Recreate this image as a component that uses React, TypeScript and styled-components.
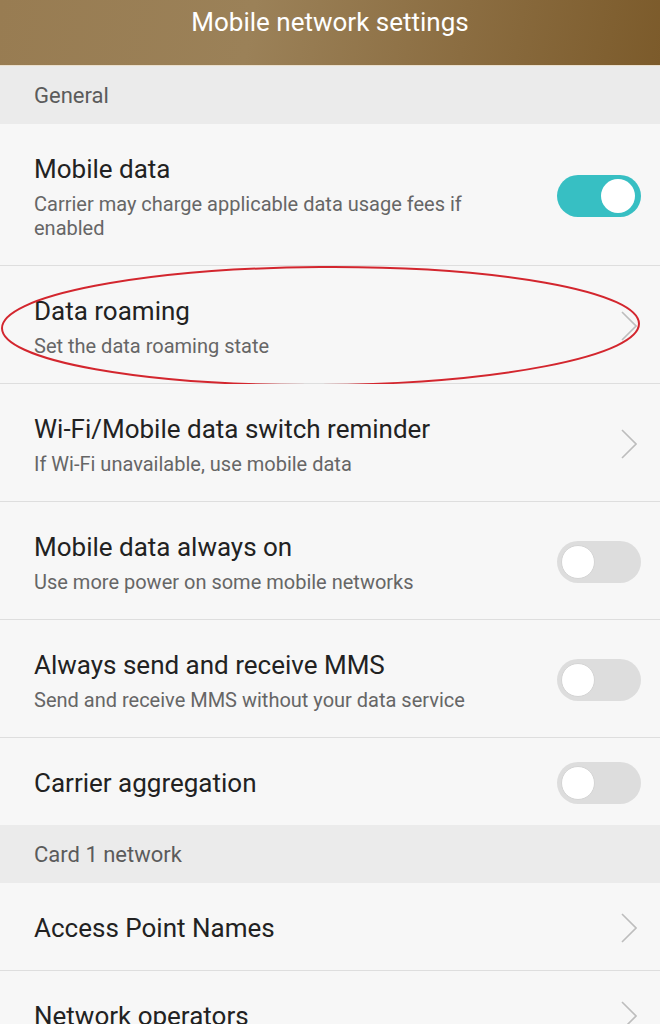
import * as React from 'react';
import styled, { createGlobalStyle } from 'styled-components';

const GlobalStyle = createGlobalStyle`
  html, body {
    margin: 0;
    padding: 0;
    background: #f7f7f7;
    font-family: Roboto, "Noto Sans", "Liberation Sans", sans-serif;
  }
`;

const Page = styled.div`
  width: 660px;
  height: 1024px;
  overflow: hidden;
  background: #f7f7f7;
`;

const Header = styled.header`
  height: 66px;
  box-sizing: border-box;
  padding-top: 6px;
  border-bottom: 1px solid #eadfcd;
  background: linear-gradient(100deg, #987c52 0%, #9b8158 38%, #8b6d41 70%, #7c5b2b 100%);
  color: #ffffff;
  font-size: 26px;
  line-height: 32px;
  text-align: center;
`;

const Section = styled.div`
  height: 58px;
  display: flex;
  align-items: center;
  padding: 0 34px;
  background: #ebebeb;
  color: #5b5b5b;
  font-size: 22px;
`;

const Row = styled.div`
  position: relative;
  display: flex;
  align-items: center;
  justify-content: space-between;
  gap: 24px;
  padding: 28px 19px 25px 34px;
  border-bottom: 1px solid #dedede;
  background: #f7f7f7;

  &:last-child {
    border-bottom: none;
  }
`;

const Texts = styled.div`
  display: flex;
  flex-direction: column;
  gap: 6px;
  min-width: 0;
`;

const Title = styled.div`
  color: #222222;
  font-size: 26px;
  line-height: 34px;
  white-space: nowrap;
`;

const Subtitle = styled.div`
  color: #666666;
  font-size: 20px;
  line-height: 24px;
  max-width: 460px;
`;

const Track = styled.div<{ $on: boolean }>`
  flex: none;
  width: 84px;
  height: 42px;
  margin: -4px 0;
  box-sizing: border-box;
  border-radius: 21px;
  padding: 4px;
  display: flex;
  justify-content: ${(p) => (p.$on ? 'flex-end' : 'flex-start')};
  background: ${(p) => (p.$on ? '#37bfc3' : '#dddddd')};
`;

const Knob = styled.div<{ $on: boolean }>`
  width: 34px;
  height: 34px;
  box-sizing: border-box;
  border-radius: 50%;
  background: #ffffff;
  ${(p) => (p.$on ? 'margin-right: 2px;' : 'border: 1px solid #d4d4d4;')}
`;

const Chevron = styled.svg`
  flex: none;
  width: 16px;
  height: 30px;
  margin: -2px 4px -2px 0;
`;

const Mark = styled.svg`
  position: absolute;
  top: 0;
  left: 0;
  width: 660px;
  height: 122px;
  overflow: visible;
  pointer-events: none;
`;

function Toggle({ on }: { on: boolean }) {
  return (
    <Track $on={on}>
      <Knob $on={on} />
    </Track>
  );
}

function Arrow() {
  return (
    <Chevron viewBox="0 0 16 30">
      <polyline points="1,1 15,15 1,29" fill="none" stroke="#bdbdbd" strokeWidth="1.6" />
    </Chevron>
  );
}

interface IItem {
  title: string;
  subtitle?: string;
  kind: 'on' | 'off' | 'arrow';
  marked?: boolean;
}

const general: IItem[] = [
  { title: 'Mobile data', subtitle: 'Carrier may charge applicable data usage fees if enabled', kind: 'on' },
  { title: 'Data roaming', subtitle: 'Set the data roaming state', kind: 'arrow', marked: true },
  { title: 'Wi-Fi/Mobile data switch reminder', subtitle: 'If Wi-Fi unavailable, use mobile data', kind: 'arrow' },
  { title: 'Mobile data always on', subtitle: 'Use more power on some mobile networks', kind: 'off' },
  { title: 'Always send and receive MMS', subtitle: 'Send and receive MMS without your data service', kind: 'off' },
  { title: 'Carrier aggregation', kind: 'off' },
];

const card: IItem[] = [
  { title: 'Access Point Names', kind: 'arrow' },
  { title: 'Network operators', kind: 'arrow' },
];

function Item({ item }: { item: IItem }) {
  return (
    <Row>
      <Texts>
        <Title>{item.title}</Title>
        {item.subtitle && <Subtitle>{item.subtitle}</Subtitle>}
      </Texts>
      {item.kind === 'arrow' ? <Arrow /> : <Toggle on={item.kind === 'on'} />}
      {item.marked && (
        <Mark viewBox="0 0 660 122">
          <ellipse cx="320.5" cy="60" rx="318.5" ry="59" fill="none" stroke="#d3262e" strokeWidth="2" transform="rotate(-0.4 320 60)" />
        </Mark>
      )}
    </Row>
  );
}

export default function App() {
  return (
    <Page>
      <GlobalStyle />
      <Header>Mobile network settings</Header>
      <Section>General</Section>
      <div>
        {general.map((item) => (
          <Item key={item.title} item={item} />
        ))}
      </div>
      <Section>Card 1 network</Section>
      <div>
        {card.map((item) => (
          <Item key={item.title} item={item} />
        ))}
      </div>
    </Page>
  );
}
